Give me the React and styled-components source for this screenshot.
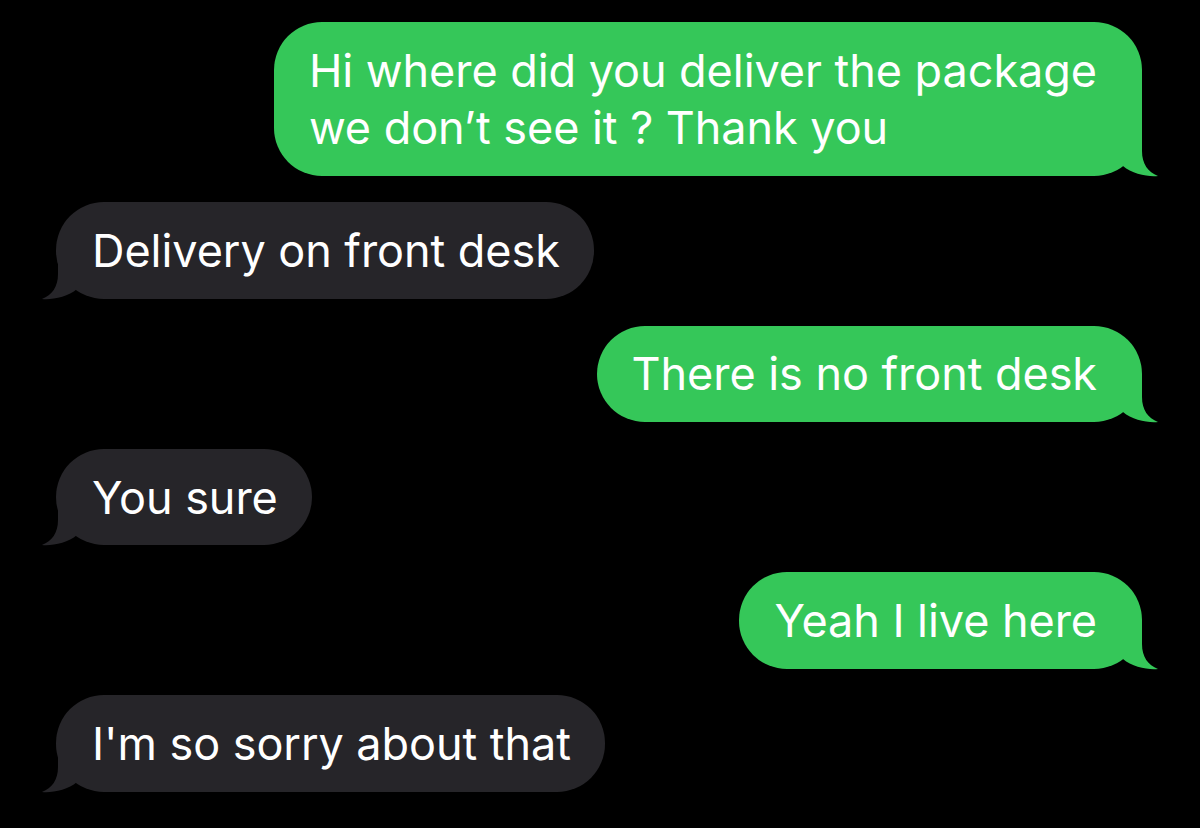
import React from 'react';
import styled, { createGlobalStyle } from 'styled-components';

const GlobalStyle = createGlobalStyle`
  html, body {
    margin: 0;
    padding: 0;
    background: #000;
  }
  body {
    font-family: Inter, "Liberation Sans", Arial, sans-serif;
    -webkit-font-smoothing: antialiased;
  }
`;

const Thread = styled.div`
  display: flex;
  flex-direction: column;
  gap: 26.8px;
  width: 1200px;
  height: 828px;
  box-sizing: border-box;
  padding: 22px 58px 0 56px;
  background: #000;
  overflow: hidden;
`;

const Row = styled.div`
  display: flex;
  justify-content: ${(p) => (p.$sent ? 'flex-end' : 'flex-start')};
`;

const Bubble = styled.div`
  position: relative;
  box-sizing: border-box;
  padding: 19.75px ${(p) => (p.$sent ? '45px 19.75px 35px' : '34px 19.75px 36px')};
  border-radius: 48px;
  background: ${(p) => (p.$sent ? '#35c759' : '#262529')};
  color: #fff;
  font-size: 45px;
  font-weight: 400;
  line-height: 57px;
  letter-spacing: -0.05px;
  white-space: nowrap;
`;

const Line = styled.div``;

const Tail = styled.svg`
  position: absolute;
  bottom: -1px;
  width: 42px;
  height: 51px;
  ${(p) => (p.$sent ? 'right: -18px;' : 'left: -16px; transform: scaleX(-1);')}
`;

const messages = [
  { sent: true, lines: ['Hi where did you deliver the package', 'we don\u2019t see it ? Thank you'] },
  { sent: false, lines: ['Delivery on front desk'] },
  { sent: true, lines: ['There is no front desk'] },
  { sent: false, lines: ['You sure'] },
  { sent: true, lines: ['Yeah I live here'] },
  { sent: false, lines: ["I'm so sorry about that"] },
];

const BubbleTail = ({ sent }) => (
  <Tail $sent={sent} viewBox="0 0 42 51">
    <path
      d="M5 2 L24 2 L24 25 C24 38 30 46 40 50 C30 51 14 48 5 40 Z"
      fill={sent ? '#35c759' : '#262529'}
    />
  </Tail>
);

const App = () => {
  return (
    <>
      <GlobalStyle />
      <Thread>
        {messages.map((m, i) => (
          <Row key={i} $sent={m.sent}>
            <Bubble $sent={m.sent}>
              {m.lines.map((l, j) => (
                <Line key={j}>{l}</Line>
              ))}
              <BubbleTail sent={m.sent} />
            </Bubble>
          </Row>
        ))}
      </Thread>
    </>
  );
};

export default App;
